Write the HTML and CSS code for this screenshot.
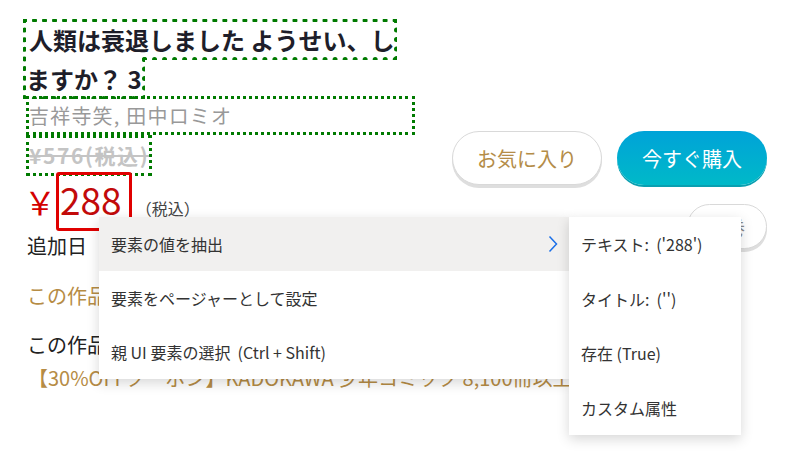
FILE: index.html
```html
<!DOCTYPE html>
<html lang="ja">
<head>
<meta charset="utf-8">
<link rel="stylesheet" href="styles.css">
</head>
<body>
<div class="page">
  <h1 class="title l"><span class="hl">人類は衰退しました ようせい、しますか？ 3</span></h1>
  <div class="author hl l">吉祥寺笑, 田中ロミオ</div>
  <div class="old hl l">¥576(税込)</div>
  <div class="price l"><span class="yen">￥</span><span class="num">288</span><span class="tax">（税込）</span></div>
  <div class="row l">追加日 <span class="gold">：2021/12/24</span></div>
  <div class="row gold gap1 l">この作品を買った人はこんな作品も</div>
  <div class="row gap2 l">この作品が含まれるキャンペーン</div>
  <div class="row gold coupon l">【30%OFFクーポン】KADOKAWA 少年コミック 8,100冊以上が対象</div>
  <div class="actions">
    <div class="btns">
      <button class="btn fav">お気に入り</button>
      <button class="btn buy">今すぐ購入</button>
    </div>
    <button class="btn more">全巻</button>
  </div>
</div>

<div class="menu">
  <div class="item active">要素の値を抽出
    <svg class="chev" width="10" height="18" viewBox="0 0 10 18"><path d="M1.5 1.5 L8.5 9 L1.5 16.5" fill="none" stroke="#1a6fe8" stroke-width="1.5"/></svg>
  </div>
  <div class="item">要素をページャーとして設定</div>
  <div class="item">親 UI 要素の選択&nbsp; (Ctrl + Shift)</div>
</div>

<div class="submenu">
  <div class="item">テキスト:&nbsp; ('288')</div>
  <div class="item">タイトル:&nbsp; ('')</div>
  <div class="item">存在 (True)</div>
  <div class="item">カスタム属性</div>
</div>
</body>
</html>
```

FILE: styles.css
```css
html, body {
  margin: 0;
  padding: 0;
}
body {
  width: 789px;
  height: 451px;
  overflow: hidden;
  position: relative;
  background: #fff;
  color: #222;
  font-family: "Noto Sans CJK JP", "Noto Sans", sans-serif;
}
.page {
  display: grid;
  grid-template-columns: 389px 1fr;
  align-content: start;
  padding: 20px 22px 0 26px;
}
.l {
  grid-column: 1;
  white-space: nowrap;
}
.hl {
  outline: 3px dotted #007a00;
}
.title {
  margin: 0;
  white-space: normal;
  font-size: 24px;
  font-weight: 700;
  line-height: 39px;
  color: #1e1e2a;
}
.title .hl {
  padding-left: 3px;
}
.author {
  margin-top: -2px;
  height: 39px;
  line-height: 39px;
  padding-left: 3px;
  font-size: 20px;
  letter-spacing: 1.2px;
  color: #999;
  outline-offset: -3px;
}
.old {
  justify-self: start;
  width: 123px;
  height: 41px;
  line-height: 41px;
  padding-left: 3px;
  font-size: 21px;
  font-weight: 700;
  letter-spacing: 1.6px;
  color: #c4c4c4;
  text-decoration: line-through;
  outline-offset: -3px;
}
.price {
  display: flex;
  align-items: baseline;
  margin-top: -4px;
  height: 59px;
}
.yen {
  font-size: 32px;
  color: #d40000;
  margin-left: -2px;
}
.num {
  display: inline-block;
  border: 3px solid #e00000;
  border-radius: 3px;
  padding: 0 7px 4px 1px;
  font-size: 37px;
  line-height: 49px;
  color: #c20a0a;
}
.tax {
  font-size: 16px;
  color: #444;
  margin-left: 4px;
}
.row {
  font-size: 20px;
  line-height: 30px;
  padding-left: 1px;
}
.gold {
  color: #b68c45;
}
.gap1 {
  margin-top: 20px;
}
.gap2 {
  margin-top: 19px;
}
.coupon {
  margin-top: 3px;
  padding-left: 2px;
}
.actions {
  grid-column: 2;
  grid-row: 1 / 6;
  display: flex;
  flex-direction: column;
  align-items: flex-end;
  padding-top: 111px;
}
.btns {
  display: flex;
  gap: 15px;
}
.btn {
  font-family: "Noto Sans CJK JP", sans-serif;
  font-size: 20px;
  border-radius: 28px;
  padding: 0;
  cursor: pointer;
}
.fav {
  width: 150px;
  height: 54px;
  background: #fff;
  border: 1px solid #d9d9d9;
  color: #b48c48;
  box-shadow: 0 3px 0 #dedede;
}
.buy {
  width: 150px;
  height: 54px;
  border: none;
  color: #fff;
  background: linear-gradient(#00a3d8, #00b9c8);
  box-shadow: 0 2px 0 #0a9fb0;
}
.more {
  margin-top: 19px;
  width: 80px;
  height: 45px;
  background: #fff;
  border: 1px solid #d9d9d9;
  color: #888;
  font-size: 18px;
  box-shadow: 0 3px 0 #dedede;
}
.menu {
  position: absolute;
  left: 99px;
  top: 217px;
  width: 470px;
  background: #fff;
  box-shadow: 0 4px 12px rgba(0, 0, 0, 0.16);
}
.submenu {
  position: absolute;
  left: 569px;
  top: 217px;
  width: 172px;
  background: #fff;
  box-shadow: 0 4px 12px rgba(0, 0, 0, 0.16);
}
.item {
  display: flex;
  align-items: center;
  height: 54px;
  padding-left: 12px;
  font-size: 16px;
  color: #333;
  white-space: nowrap;
}
.submenu .item {
  height: 54.5px;
}
.item.active {
  background: #f1f0ef;
}
.chev {
  margin-left: auto;
  margin-right: 11px;
}
```
